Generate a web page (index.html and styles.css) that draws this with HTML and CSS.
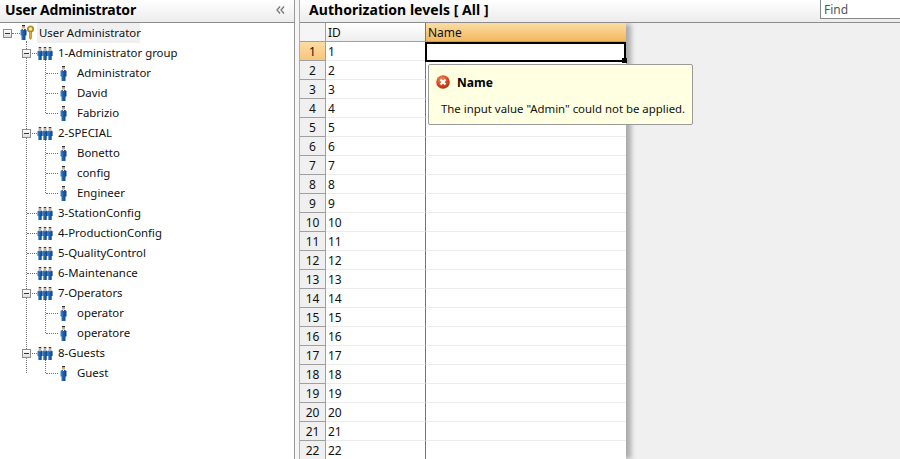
FILE: index.html
```html
<!DOCTYPE html>
<html lang="en">
<head>
<meta charset="utf-8">
<title>User Administrator</title>
<link rel="stylesheet" href="styles.css">
</head>
<body>
<svg class="defs" width="0" height="0">
  <defs>
    <linearGradient id="blue" x1="0" x2="1" y1="0" y2="0"><stop offset="0" stop-color="#3f86cc"/><stop offset=".5" stop-color="#1b5ea6"/><stop offset="1" stop-color="#123f78"/></linearGradient>
    <symbol id="person" viewBox="0 0 7 15">
      <rect x="2" y="0" width="3" height="1.500" fill="#2b2b38"/>
      <rect x="2" y="1.500" width="3" height="2" fill="#d9a878"/>
      <path d="M0.500 5L2 4h3l1.500 1V10.500H5.500V15h-4V10.500H.5z" fill="url(#blue)"/>
      <rect x="3" y="4" width="1" height="1" fill="#e8eef8"/>
    </symbol>
    <symbol id="group" viewBox="0 0 16 15">
      <use href="#person" x="0" y="0" width="6" height="15"/>
      <use href="#person" x="10" y="0" width="6" height="15"/>
      <use href="#person" x="5" y="0" width="6" height="15"/>
    </symbol>
    <symbol id="admin" viewBox="0 0 14 16">
      <use href="#person" x="0" y="0" width="7" height="15"/>
      <circle cx="10.500" cy="4" r="2.700" fill="#f6e9b0" stroke="#b98f1c" stroke-width="1.800"/>
      <path d="M9.500 6.500h2v6.500l-1 1.500-1-1z" fill="#d9ae30" stroke="#9c7512" stroke-width=".6"/>
    </symbol>
  </defs>
</svg>
<div class="app">
  <aside class="left">
    <header class="bar">
      <h1 class="title">User Administrator</h1>
      <svg class="collapse" viewBox="0 0 9 8"><path d="M4 .5L1 4l3 3.500M8 .5L5 4l3 3.500" fill="none" stroke="#777" stroke-width="1.300"/></svg>
    </header>
    <div class="tree">
      <div class="row root"><span class="exp"></span><svg class="ic-admin"><use href="#admin"/></svg><span class="label selected">User Administrator</span></div>
      <div class="kids kids-root">
        <div class="row group"><span class="exp"></span><svg class="ic-group"><use href="#group"/></svg><span class="label">1-Administrator group</span></div>
        <div class="kids kids-group">
          <div class="row user"><svg class="ic-user"><use href="#person"/></svg><span class="label">Administrator</span></div>
          <div class="row user"><svg class="ic-user"><use href="#person"/></svg><span class="label">David</span></div>
          <div class="row user"><svg class="ic-user"><use href="#person"/></svg><span class="label">Fabrizio</span></div>
        </div>
        <div class="row group"><span class="exp"></span><svg class="ic-group"><use href="#group"/></svg><span class="label">2-SPECIAL</span></div>
        <div class="kids kids-group">
          <div class="row user"><svg class="ic-user"><use href="#person"/></svg><span class="label">Bonetto</span></div>
          <div class="row user"><svg class="ic-user"><use href="#person"/></svg><span class="label">config</span></div>
          <div class="row user"><svg class="ic-user"><use href="#person"/></svg><span class="label">Engineer</span></div>
        </div>
        <div class="row group leaf"><svg class="ic-group"><use href="#group"/></svg><span class="label">3-StationConfig</span></div>
        <div class="row group leaf"><svg class="ic-group"><use href="#group"/></svg><span class="label">4-ProductionConfig</span></div>
        <div class="row group leaf"><svg class="ic-group"><use href="#group"/></svg><span class="label">5-QualityControl</span></div>
        <div class="row group leaf"><svg class="ic-group"><use href="#group"/></svg><span class="label">6-Maintenance</span></div>
        <div class="row group"><span class="exp"></span><svg class="ic-group"><use href="#group"/></svg><span class="label">7-Operators</span></div>
        <div class="kids kids-group">
          <div class="row user"><svg class="ic-user"><use href="#person"/></svg><span class="label">operator</span></div>
          <div class="row user"><svg class="ic-user"><use href="#person"/></svg><span class="label">operatore</span></div>
        </div>
        <div class="row group"><span class="exp"></span><svg class="ic-group"><use href="#group"/></svg><span class="label">8-Guests</span></div>
        <div class="kids kids-group">
          <div class="row user"><svg class="ic-user"><use href="#person"/></svg><span class="label">Guest</span></div>
        </div>
      </div>
    </div>
  </aside>
  <div class="gutter"></div>
  <main class="right">
    <header class="bar bar-right">
      <h2 class="title">Authorization levels [ All ]</h2>
      <div class="find">Find</div>
    </header>
    <div class="content">
      <div class="grid">
        <div class="grow head"><div class="rh"></div><div class="c-id">ID</div><div class="c-name">Name</div></div>
        <div class="grow"><div class="rh active">1</div><div class="c-id">1</div><div class="c-name editing"><span class="handle"></span></div></div>
        <div class="grow"><div class="rh">2</div><div class="c-id">2</div><div class="c-name"></div></div>
        <div class="grow"><div class="rh">3</div><div class="c-id">3</div><div class="c-name"></div></div>
        <div class="grow"><div class="rh">4</div><div class="c-id">4</div><div class="c-name"></div></div>
        <div class="grow"><div class="rh">5</div><div class="c-id">5</div><div class="c-name"></div></div>
        <div class="grow"><div class="rh">6</div><div class="c-id">6</div><div class="c-name"></div></div>
        <div class="grow"><div class="rh">7</div><div class="c-id">7</div><div class="c-name"></div></div>
        <div class="grow"><div class="rh">8</div><div class="c-id">8</div><div class="c-name"></div></div>
        <div class="grow"><div class="rh">9</div><div class="c-id">9</div><div class="c-name"></div></div>
        <div class="grow"><div class="rh">10</div><div class="c-id">10</div><div class="c-name"></div></div>
        <div class="grow"><div class="rh">11</div><div class="c-id">11</div><div class="c-name"></div></div>
        <div class="grow"><div class="rh">12</div><div class="c-id">12</div><div class="c-name"></div></div>
        <div class="grow"><div class="rh">13</div><div class="c-id">13</div><div class="c-name"></div></div>
        <div class="grow"><div class="rh">14</div><div class="c-id">14</div><div class="c-name"></div></div>
        <div class="grow"><div class="rh">15</div><div class="c-id">15</div><div class="c-name"></div></div>
        <div class="grow"><div class="rh">16</div><div class="c-id">16</div><div class="c-name"></div></div>
        <div class="grow"><div class="rh">17</div><div class="c-id">17</div><div class="c-name"></div></div>
        <div class="grow"><div class="rh">18</div><div class="c-id">18</div><div class="c-name"></div></div>
        <div class="grow"><div class="rh">19</div><div class="c-id">19</div><div class="c-name"></div></div>
        <div class="grow"><div class="rh">20</div><div class="c-id">20</div><div class="c-name"></div></div>
        <div class="grow"><div class="rh">21</div><div class="c-id">21</div><div class="c-name"></div></div>
        <div class="grow"><div class="rh">22</div><div class="c-id">22</div><div class="c-name"></div></div>
      </div>
      <div class="tip">
        <div class="tip-head">
          <svg class="tip-icon" viewBox="0 0 14 14">
            <defs><radialGradient id="red" cx=".4" cy=".3" r=".8"><stop offset="0" stop-color="#f08a60"/><stop offset=".6" stop-color="#d5421c"/><stop offset="1" stop-color="#9c2a10"/></radialGradient></defs>
            <circle cx="7" cy="7" r="6.800" fill="url(#red)"/>
            <path d="M4.500 4.500l5 5M9.500 4.500l-5 5" stroke="#fff" stroke-width="2.200"/>
          </svg>
          <strong class="tip-title">Name</strong>
        </div>
        <p class="tip-text">The input value "Admin" could not be applied.</p>
      </div>
    </div>
  </main>
</div>
</body>
</html>
```

FILE: styles.css
```css
* { box-sizing: border-box; }
html, body { margin: 0; height: 100%; }
body {
  width: 900px;
  height: 459px;
  overflow: hidden;
  background: #f0f0f0;
  color: #111;
  font-family: "Noto Sans", "DejaVu Sans", sans-serif;
  font-size: 11.4px;
}
.defs { position: absolute; }
.app { display: flex; height: 459px; }

.left {
  width: 295px;
  flex: none;
  background: #fff;
  border-right: 1px solid #999;
}
.gutter {
  width: 5px;
  flex: none;
  background: #f6f6f6;
  border-right: 1px solid #f0a040;
}
.right { flex: 1; min-width: 0; display: flex; flex-direction: column; }

.bar {
  height: 23px;
  flex: none;
  display: flex;
  align-items: flex-start;
  justify-content: space-between;
  background: linear-gradient(#ffffff, #ececec);
  border-bottom: 1px solid #8c8c8c;
}
.title {
  margin: 0;
  font-size: 14px;
  line-height: 19px;
  font-weight: 700;
  color: #000;
  padding-left: 5px;
}
.left .title { letter-spacing: -.17px; }
.collapse {
  width: 9px;
  height: 8px;
  margin: 6px 9px 0 0;
  flex: none;
}
.bar-right { padding-left: 9px; }
.bar-right .title { padding-left: 0; letter-spacing: .05px; }
.find {
  width: 80px;
  height: 19px;
  background: #fff;
  border-left: 1px solid #888;
  border-bottom: 1px solid #888;
  padding-left: 3px;
  line-height: 20px;
  font-size: 12px;
  color: #555;
}

.row {
  position: relative;
  height: 20px;
  display: flex;
  align-items: center;
}
.label { line-height: 20px; color: #111; white-space: nowrap; }
.exp {
  position: relative;
  width: 9px;
  height: 9px;
  flex: none;
  background: linear-gradient(#fff, #ddd);
  border: 1px solid #8e8e8e;
}
.exp::after {
  content: "";
  position: absolute;
  left: 1px;
  top: 3px;
  width: 5px;
  height: 1px;
  background: #333;
}
.root { padding-left: 3px; }
.ic-admin { width: 14px; height: 16px; margin-left: 8px; flex: none; }
.selected {
  background: #f0f0f0;
  width: 103px;
  padding-left: 2px;
  margin-left: 3px;
}
.group { padding-left: 22px; }
.group.leaf { padding-left: 37px; }
.ic-group { width: 16px; height: 15px; margin-left: 6px; flex: none; }
.leaf .ic-group { margin-left: 0; }
.group .label { margin-left: 5px; }
.user { padding-left: 60px; }
.ic-user { width: 7px; height: 15px; flex: none; }
.user .label { margin-left: 10px; }

.kids { position: relative; }
.kids::before {
  content: "";
  position: absolute;
  top: 0;
  bottom: 10px;
  border-left: 1px dotted #777;
}
.kids-root::before { left: 26px; top: -2px; }
.kids-group::before { left: 45px; top: -3px; }
.group::before, .user::before, .root::before {
  content: "";
  position: absolute;
  top: 10px;
  border-top: 1px dotted #777;
}
.root::before { left: 12px; width: 8px; }
.group::before { left: 27px; width: 10px; }
.group > .exp { z-index: 1; }
.user::before { left: 46px; width: 12px; }

.content { position: relative; flex: 1; min-height: 0; overflow: hidden; }
.grid {
  width: 326px;
  box-shadow: 6px 0 5px -1px #aaa;
  background: #fff;
}
.grow { display: flex; height: 19px; }
.rh {
  width: 26px;
  flex: none;
  background: #f0f0f0;
  border-right: 1px solid #a0a0a0;
  border-bottom: 1px solid #a0a0a0;
  text-align: center;
  line-height: 20px;
  font-size: 12px;
}
.rh.active { background: linear-gradient(#fbdca4, #f7c67c); }
.c-id {
  width: 100px;
  flex: none;
  padding-left: 2px;
  line-height: 20px;
  font-size: 12px;
  border-bottom: 1px solid #ececec;
  border-right: 1px solid #777;
}
.c-name {
  position: relative;
  flex: 1;
  padding-left: 2px;
  line-height: 20px;
  font-size: 12px;
  border-bottom: 1px solid #ececec;
}
.head .rh { background: #f5f5f5; }
.head .c-id {
  background: linear-gradient(#fff, #eee);
  border-bottom-color: #a0a0a0;
}
.head .c-name {
  background: linear-gradient(#fbdca4, #f3b860);
  border-bottom-color: #d09a50;
}
.editing { border: 2px solid #000; margin-left: -1px; height: 20px; }
.handle {
  position: absolute;
  right: -3px;
  bottom: -3px;
  width: 5px;
  height: 5px;
  background: #000;
}

.tip {
  position: absolute;
  left: 128px;
  top: 41px;
  width: 265px;
  height: 61px;
  background: #ffffe1;
  border: 1px solid #9a9a9a;
  border-radius: 2px;
  padding: 8px 0 0 7px;
}
.tip-head { display: flex; align-items: center; height: 18px; }
.tip-icon { width: 14px; height: 14px; flex: none; }
.tip-title { margin-left: 7px; font-weight: 700; font-size: 12px; color: #000; }
.tip-text { margin: 10px 0 0 5px; line-height: 16px; white-space: nowrap; color: #111; }
```
